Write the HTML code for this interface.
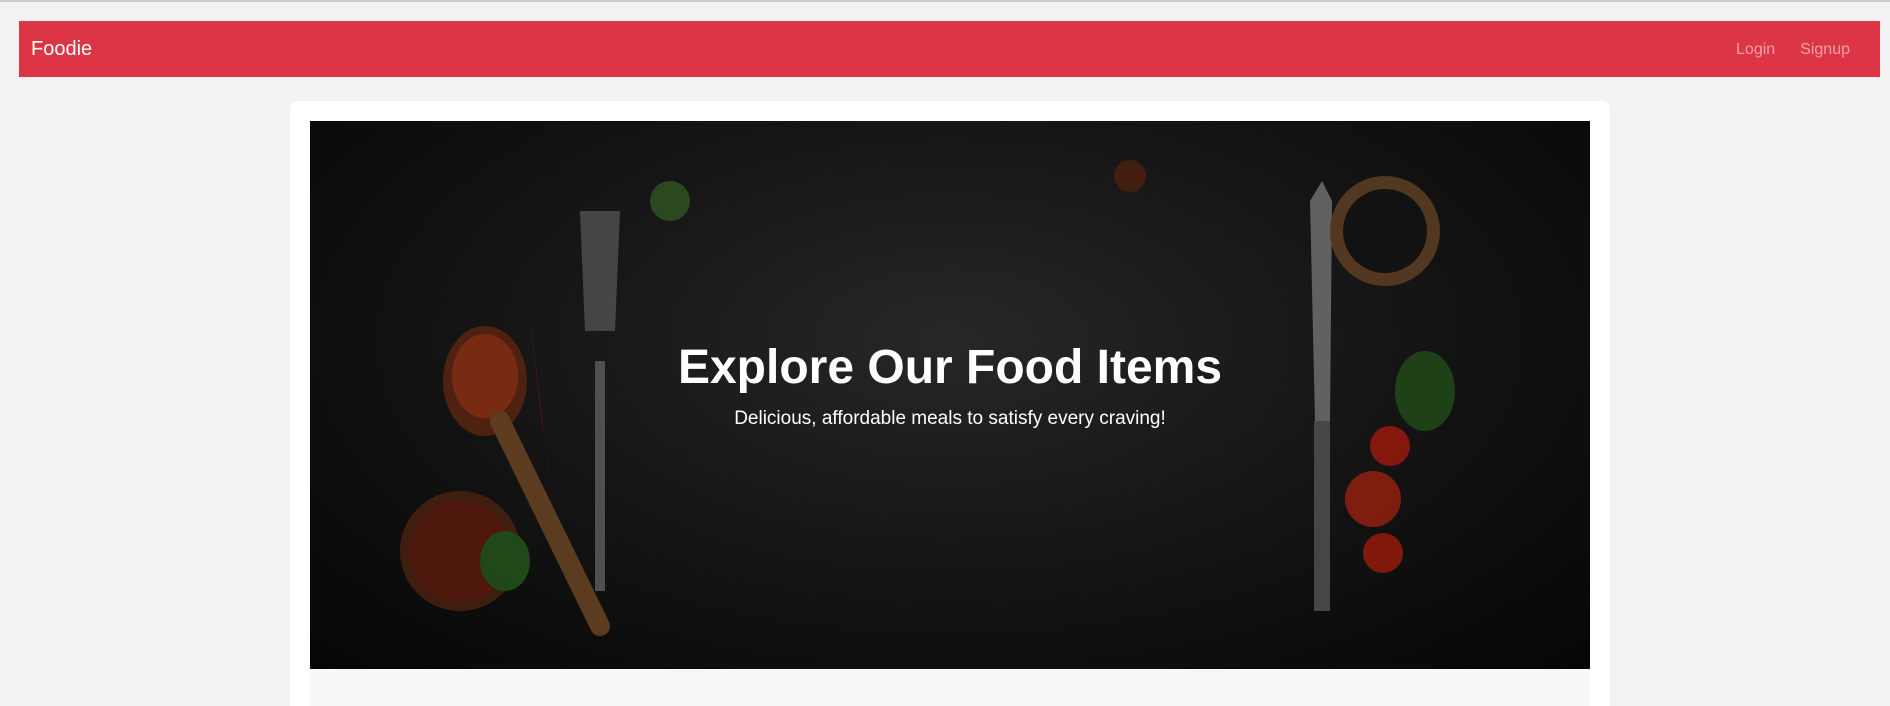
<!DOCTYPE html>
<html style="height:706px;overflow:hidden"><head><meta charset="utf-8"><style>
body{margin:0;width:1890px;height:706px;background:#f3f3f3;font-family:"Liberation Sans",Arial,sans-serif;overflow:hidden;border-top:2px solid #ccc;box-sizing:border-box;position:relative}
.nav{position:absolute;left:19px;top:19px;width:1861px;height:56px;background:#dc3545}
.brand{position:absolute;left:12px;top:17px;color:#fff;font-size:20px}
.links{position:absolute;right:30px;top:20px;color:#f2a0a8;font-size:16px}
.links span{margin-left:25px}
.card{position:absolute;left:290px;top:99px;width:1320px;height:605px;background:#fff;border-radius:8px 8px 0 0;overflow:hidden}
.below{position:absolute;left:20px;top:568px;width:1280px;height:40px;background:#f8f8f8}
.hero{position:absolute;left:20px;top:20px;width:1280px;height:548px;background:radial-gradient(ellipse at 50% 40%,#262728 0%,#161617 45%,#060606 100%);overflow:hidden}
h1{position:absolute;left:95px;width:1090px;text-align:center;top:219px;margin:0;color:#fff;font-size:48px;font-weight:bold}
p{position:absolute;left:95px;width:1090px;text-align:center;top:287px;margin:0;color:#fff;font-size:19px}
</style></head><body>
<div class="nav"><div class="brand">Foodie</div><div class="links"><span>Login</span><span>Signup</span></div></div>
<div class="card">
<div class="hero">
<svg width="1280" height="548" style="position:absolute;left:0;top:0" opacity="0.85">
<ellipse cx="175" cy="260" rx="42" ry="55" fill="#5a2410"/>
<ellipse cx="175" cy="255" rx="33" ry="42" fill="#8a3012"/>
<line x1="190" y1="300" x2="290" y2="505" stroke="#6a4422" stroke-width="20" stroke-linecap="round"/>
<circle cx="150" cy="430" r="60" fill="#4a2210"/>
<circle cx="150" cy="430" r="50" fill="#5a1a0c"/>
<ellipse cx="195" cy="440" rx="25" ry="30" fill="#25521a"/>
<path d="M215 160 L232 300 L245 390 L235 320 Z" fill="#a0160c"/>
<line x1="290" y1="240" x2="290" y2="470" stroke="#5a5a5a" stroke-width="10"/>
<path d="M270 90 L310 90 L305 210 L275 210 Z" fill="#4e4e4e"/>
<circle cx="360" cy="80" r="20" fill="#2e5220"/>
<circle cx="820" cy="55" r="16" fill="#4a200e"/>
<path d="M1000 80 L1012 60 L1022 80 L1020 300 L1005 300 Z" fill="#6e6e6e"/>
<line x1="1012" y1="300" x2="1012" y2="490" stroke="#505050" stroke-width="16"/>
<circle cx="1075" cy="110" r="55" fill="#5e3e24"/>
<circle cx="1075" cy="110" r="42" fill="#121212"/>
<circle cx="1080" cy="325" r="20" fill="#9a1a0c"/>
<circle cx="1063" cy="378" r="28" fill="#92200e"/>
<circle cx="1073" cy="432" r="20" fill="#941a0c"/>
<ellipse cx="1115" cy="270" rx="30" ry="40" fill="#224a18"/>
</svg>
<h1>Explore Our Food Items</h1>
<p>Delicious, affordable meals to satisfy every craving!</p>
</div>
<div class="below"></div>
</div>
</body></html>
